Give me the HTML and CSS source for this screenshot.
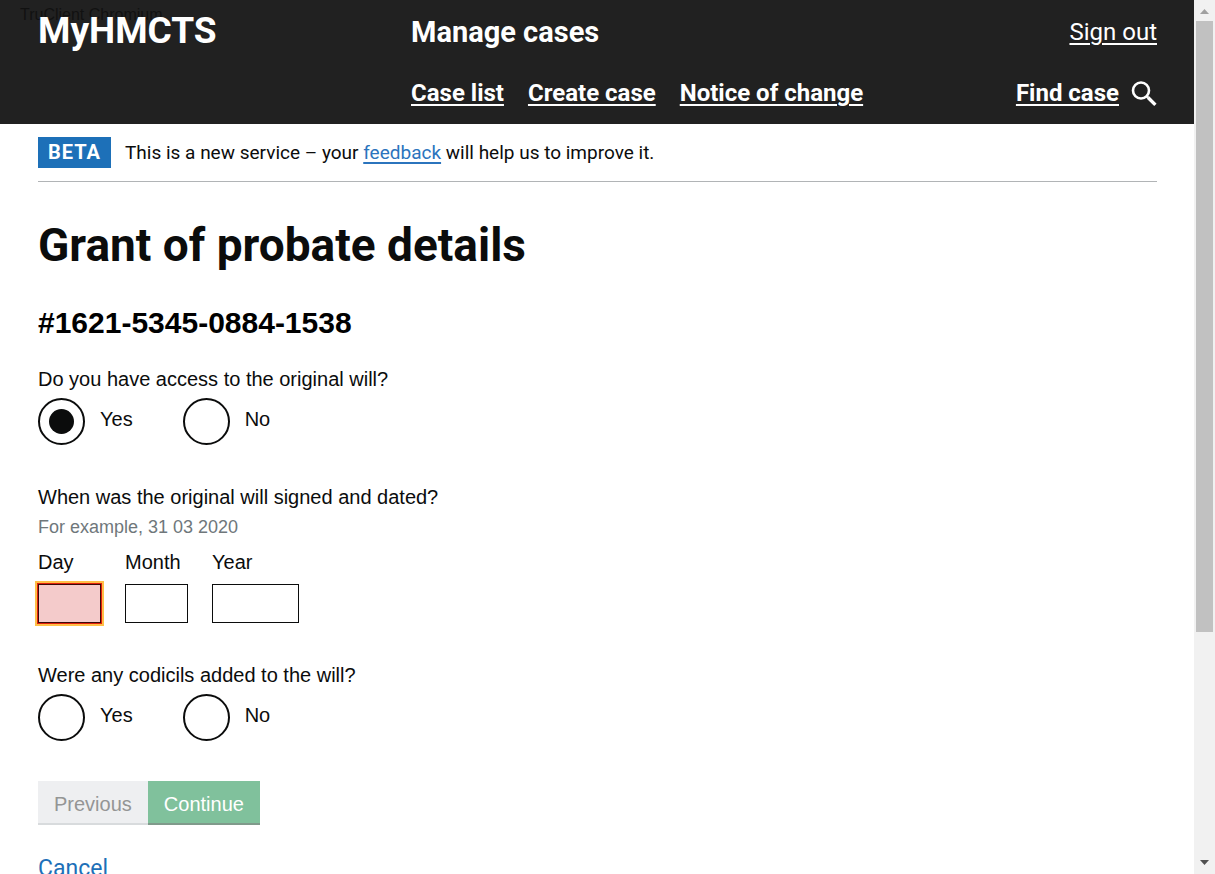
FILE: index.html
```html
<!DOCTYPE html>
<html lang="en">
<head>
<meta charset="utf-8">
<title>Grant of probate details</title>
<link rel="stylesheet" href="styles.css">
</head>
<body>
<div class="page">
  <header class="header">
    <span class="watermark">TruClient Chromium</span>
    <div class="logo">MyHMCTS</div>
    <div class="header-content">
      <div class="header-row">
        <span class="service">Manage cases</span>
        <a class="sign-out" href="#">Sign out</a>
      </div>
      <nav class="header-row nav">
        <div class="nav-links">
          <a href="#">Case list</a>
          <a href="#">Create case</a>
          <a href="#">Notice of change</a>
        </div>
        <div class="find">
          <a href="#">Find case</a>
          <svg width="26" height="28" viewBox="0 -2 26 28" fill="none" stroke="#fff" aria-hidden="true"><circle cx="10" cy="9.5" r="8" stroke-width="2.6"/><path d="M15.5 15l1.5 1.5" stroke-width="2.6"/><path d="M17 16.5l7.4 7.4" stroke-width="3.4"/></svg>
        </div>
      </nav>
    </div>
  </header>
  <main class="main">
    <div class="phase">
      <strong class="tag">BETA</strong>
      <span>This is a new service – your <a href="#">feedback</a> will help us to improve it.</span>
    </div>
    <h1>Grant of probate details</h1>
    <h2>#1621-5345-0884-1538</h2>
    <form>
      <fieldset class="group">
        <legend>Do you have access to the original will?</legend>
        <div class="radios">
          <div class="option"><input type="radio" name="access" id="access-yes" checked><label for="access-yes">Yes</label></div>
          <div class="option"><input type="radio" name="access" id="access-no"><label for="access-no">No</label></div>
        </div>
      </fieldset>
      <fieldset class="group">
        <legend>When was the original will signed and dated?</legend>
        <p class="hint">For example, 31 03 2020</p>
        <div class="date">
          <div class="field"><label for="day">Day</label><input class="short invalid" type="text" id="day"></div>
          <div class="field"><label for="month">Month</label><input class="short" type="text" id="month"></div>
          <div class="field"><label for="year">Year</label><input class="long" type="text" id="year"></div>
        </div>
      </fieldset>
      <fieldset class="group">
        <legend>Were any codicils added to the will?</legend>
        <div class="radios">
          <div class="option"><input type="radio" name="codicils" id="codicils-yes"><label for="codicils-yes">Yes</label></div>
          <div class="option"><input type="radio" name="codicils" id="codicils-no"><label for="codicils-no">No</label></div>
        </div>
      </fieldset>
      <div class="actions">
        <button class="previous" type="button" disabled>Previous</button><button class="continue" type="submit" disabled>Continue</button>
      </div>
      <a class="cancel" href="#">Cancel</a>
    </form>
  </main>
</div>
<div class="scrollbar" aria-hidden="true">
  <svg width="9" height="5" viewBox="0 0 9 5"><path d="M0 5h9L4.5 0z" fill="#a0a0a0"/></svg>
  <div class="track"><div class="thumb"></div></div>
  <svg width="9" height="5" viewBox="0 0 9 5"><path d="M0 0h9L4.5 5z" fill="#505050"/></svg>
</div>
</body>
</html>
```
FILE: styles.css
```css
* {
  box-sizing: border-box;
}

body {
  display: flex;
  height: 100vh;
  margin: 0;
  overflow: hidden;
  background: #fff;
  color: #0b0c0c;
  font: 20px/24px "Liberation Sans", Arial, sans-serif;
}

.page {
  flex: 1;
  min-width: 0;
  overflow: hidden;
}

.header {
  position: relative;
  display: grid;
  grid-template-columns: 1fr 2fr;
  padding: 12px 37px 14px 38px;
  background: #212121;
  color: #fff;
  font-family: Roboto, sans-serif;
}

.watermark {
  position: absolute;
  top: 3px;
  left: 20px;
  color: #111;
  font: 16px/24px "Liberation Sans", Arial, sans-serif;
}

.logo {
  position: relative;
  font-size: 37px;
  font-weight: 700;
  line-height: 38px;
}

.header-row {
  display: flex;
  justify-content: space-between;
  align-items: center;
  height: 40px;
}

.header a {
  color: #fff;
  font-size: 24px;
  text-underline-offset: 3px;
  text-decoration-thickness: 2px;
}

.service {
  font-size: 29px;
  font-weight: 700;
}

.nav {
  height: 34px;
  margin-top: 24px;
  font-weight: 700;
}

.nav-links {
  display: flex;
  gap: 24px;
}

.find {
  display: flex;
  align-items: center;
  gap: 12px;
}

.main {
  padding: 13px 37px 0 38px;
}

.phase {
  display: flex;
  align-items: center;
  gap: 14px;
  padding-bottom: 13px;
  border-bottom: 1px solid #b1b4b6;
  font: 19px/31px Roboto, sans-serif;
}

.phase a {
  color: #2b74bd;
  text-underline-offset: 3px;
  text-decoration-thickness: 2px;
}

.tag {
  padding: 0 10px;
  background: #1d70b8;
  color: #fff;
  font-size: 20px;
  letter-spacing: 1px;
}

h1 {
  margin: 35px 0 0;
  font: 700 46px/56px Roboto, sans-serif;
}

h2 {
  margin: 32px 0 0;
  color: #000;
  font-size: 30px;
  line-height: 36px;
}

form {
  margin-top: 26px;
}

.group {
  min-width: 0;
  margin: 0;
  padding: 0 0 40px;
  border: 0;
}

legend {
  padding: 0;
}

.radios {
  display: flex;
  gap: 50px;
  margin-top: 7px;
}

.option {
  display: flex;
  align-items: flex-start;
  gap: 15px;
}

.option label {
  padding-top: 9px;
}

.option input {
  display: grid;
  place-items: center;
  width: 47px;
  height: 47px;
  margin: 0;
  appearance: none;
  border: 2px solid #0b0c0c;
  border-radius: 50%;
  background: #fff;
}

.option input:checked::before {
  content: "";
  width: 25px;
  height: 25px;
  border-radius: 50%;
  background: #0b0c0c;
}

.hint {
  margin: 6px 0 0;
  color: #6f777b;
  font-size: 18px;
}

.date {
  display: flex;
  gap: 24px;
  margin-top: 11px;
}

.field {
  display: flex;
  flex-direction: column;
  gap: 10px;
}

.field input {
  height: 39px;
  border: 1px solid #0b0c0c;
  padding: 0 8px;
  font: inherit;
}

.field .short {
  width: 63px;
}

.field .long {
  width: 87px;
}

.field .invalid {
  outline: 2px solid #ffbf47;
  outline-offset: 1px;
  border-color: #3a0a0a;
  background: #f4cbcb;
  box-shadow: 0 0 0 1px #e0200c;
}

.actions {
  display: flex;
}

.actions button {
  height: 44px;
  padding: 4px 16px 2px;
  border: 0;
  font: inherit;
  box-shadow: inset 0 -2px #d8dbdd;
}

.actions .previous {
  background: #eeeff1;
  color: #949595;
}

.actions .continue {
  background: #80c19c;
  color: #fff;
  box-shadow: inset 0 -2px #809a8b;
}

.cancel {
  display: inline-block;
  margin-top: 32px;
  color: #1d70b8;
  font: 23px/24px Roboto, sans-serif;
  text-decoration: none;
}

.scrollbar {
  display: flex;
  flex-direction: column;
  align-items: center;
  width: 21px;
  padding: 9px 2px;
  background: #f1f1f1;
}

.track {
  flex: 1;
  width: 100%;
  margin: 7px 0;
}

.thumb {
  height: 73.4%;
  background: #c1c1c1;
}
```
